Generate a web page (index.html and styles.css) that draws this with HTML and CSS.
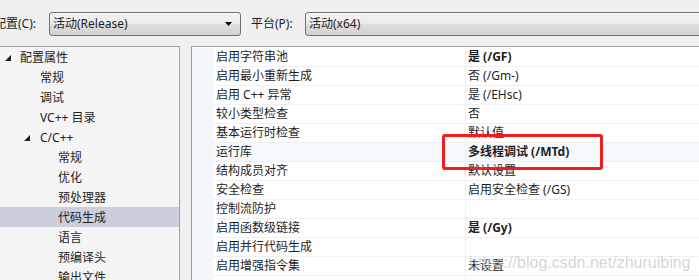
FILE: index.html
```html
<!DOCTYPE html>
<html lang="zh-CN">
<head>
	<meta charset="UTF-8">
	<title>代码生成 属性页</title>
	<link rel="stylesheet" href="styles.css">
</head>
<body>
	<div class="toolbar">
		<span class="field-label first">配置(C):</span>
		<div class="combo combo-config">
			<span class="combo-text">活动(Release)</span>
			<svg class="combo-arrow" width="7" height="4" viewBox="0 0 7 4"><polygon points="0,0 7,0 3.5,4" fill="#000"/></svg>
		</div>
		<span class="field-label second">平台(P):</span>
		<div class="combo combo-platform">
			<span class="combo-text">活动(x64)</span>
		</div>
	</div>

	<div class="panes">
		<div class="tree">
			<div class="node level0"><svg class="twisty" width="6" height="6" viewBox="0 0 6 6"><polygon points="6,0 6,6 0,6" fill="#1e1e1e"/></svg>配置属性</div>
			<div class="node level1">常规</div>
			<div class="node level1">调试</div>
			<div class="node level1">VC++ 目录</div>
			<div class="node level1"><svg class="twisty" width="6" height="6" viewBox="0 0 6 6"><polygon points="6,0 6,6 0,6" fill="#1e1e1e"/></svg>C/C++</div>
			<div class="node level2">常规</div>
			<div class="node level2">优化</div>
			<div class="node level2">预处理器</div>
			<div class="node level2 selected">代码生成</div>
			<div class="node level2">语言</div>
			<div class="node level2">预编译头</div>
			<div class="node level2">输出文件</div>
		</div>

		<div class="grid">
			<div class="row"><div class="gutter"></div><div class="name">启用字符串池</div><div class="value bold">是 (/GF)</div></div>
			<div class="row"><div class="gutter"></div><div class="name">启用最小重新生成</div><div class="value">否 (/Gm-)</div></div>
			<div class="row"><div class="gutter"></div><div class="name">启用 C++ 异常</div><div class="value">是 (/EHsc)</div></div>
			<div class="row"><div class="gutter"></div><div class="name">较小类型检查</div><div class="value">否</div></div>
			<div class="row"><div class="gutter"></div><div class="name">基本运行时检查</div><div class="value">默认值</div></div>
			<div class="row current"><div class="gutter"></div><div class="name">运行库</div><div class="value bold">多线程调试 (/MTd)</div></div>
			<div class="row"><div class="gutter"></div><div class="name">结构成员对齐</div><div class="value">默认设置</div></div>
			<div class="row"><div class="gutter"></div><div class="name">安全检查</div><div class="value">启用安全检查 (/GS)</div></div>
			<div class="row"><div class="gutter"></div><div class="name">控制流防护</div><div class="value"></div></div>
			<div class="row"><div class="gutter"></div><div class="name">启用函数级链接</div><div class="value bold">是 (/Gy)</div></div>
			<div class="row"><div class="gutter"></div><div class="name">启用并行代码生成</div><div class="value"></div></div>
			<div class="row"><div class="gutter"></div><div class="name">启用增强指令集</div><div class="value">未设置</div></div>
			<div class="row"><div class="gutter"></div><div class="name"></div><div class="value"></div></div>
		</div>
	</div>

	<div class="callout"></div>
	<div class="watermark">https://blog.csdn.net/zhuruibing</div>
</body>
</html>
```

FILE: styles.css
```css
*{
	margin: 0;
	padding: 0;
	box-sizing: border-box;
}
html, body{
	width: 699px;
	height: 280px;
	overflow: hidden;
}
body{
	background: #f0f0f0;
	color: #1e1e1e;
	font: 12px/18px "Noto Sans", "Noto Sans CJK SC", sans-serif;
	position: relative;
}

/* top bar */
.toolbar{
	display: flex;
	align-items: flex-start;
	height: 46px;
	padding-top: 12px;
	white-space: nowrap;
}
.field-label{
	line-height: 24px;
}
.field-label.first{
	width: 55px;
	margin-left: -6px;
}
.field-label.second{
	width: 54px;
	margin-left: 10px;
}
.combo{
	display: flex;
	align-items: center;
	height: 24px;
	padding: 0 4px 0 3px;
	border: 1px solid #707070;
	border-radius: 3px;
	background: linear-gradient(#f3f3f3 0, #ececec 48%, #dddddd 52%, #d2d2d2 100%);
	box-shadow: inset 0 1px 0 #fafafa;
}
.combo-config{
	width: 192px;
}
.combo-platform{
	flex: 1;
	margin-right: -10px;
}
.combo-text{
	flex: 1;
}
.combo-arrow{
	margin-right: 4px;
}

/* panes */
.panes{
	display: flex;
	gap: 11px;
	height: 260px;
}
.tree{
	width: 180px;
	background: #f5f5f5;
	border-top: 1px solid #a0a0a0;
	border-right: 1px solid #a0a0a0;
	white-space: nowrap;
}
.node{
	display: flex;
	align-items: center;
	height: 20px;
	line-height: 19px;
	padding-top: 1px;
}
.node.level0{
	padding-left: 5px;
}
.node.level1{
	padding-left: 40px;
}
.node.level1 .twisty{
	margin-left: -16px;
	margin-right: 10px;
}
.node.level2{
	padding-left: 58px;
}
.node.selected{
	background: #cccedb;
}
.twisty{
	margin-right: 9px;
	margin-top: 1px;
	flex: none;
}

.grid{
	flex: 1;
	margin-right: -20px;
	padding-top: 1px;
	background: #fff;
	border-top: 1px solid #a0a0a0;
	border-left: 1px solid #a0a0a0;
}
.row{
	display: flex;
	height: 19px;
}
.gutter{
	width: 21px;
	background: #f3f6fa;
	flex: none;
}
.name, .value{
	height: 19px;
	line-height: 18px;
	border-bottom: 1px solid #eef0f2;
	white-space: nowrap;
}
.name{
	width: 253px;
	padding-left: 3px;
	border-right: 1px solid #eef0f2;
}
.value{
	flex: 1;
	padding-left: 2px;
}
.value.bold{
	font-weight: bold;
}
.row.current .name, .row.current .value{
	background: #f5f8fc;
}

/* annotation overlay */
.callout{
	position: absolute;
	left: 442px;
	top: 134px;
	width: 161px;
	height: 36px;
	border: 3px solid #f21c1c;
	border-radius: 3px;
}
.watermark{
	position: absolute;
	left: 469px;
	top: 255px;
	font: 16px/16px "Liberation Sans", sans-serif;
	color: rgba(195, 195, 195, 0.7);
	white-space: nowrap;
}
```
